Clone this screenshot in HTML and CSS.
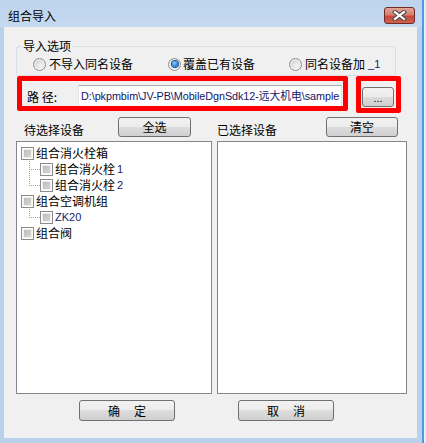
FILE: index.html
```html
<!DOCTYPE html>
<html>
<head>
<meta charset="utf-8">
<link rel="stylesheet" href="styles.css">
</head>
<body>
<div class="window">
  <div class="titlebar">
    <span class="title">组合导入</span>
    <div class="close">
      <svg width="15" height="11" viewBox="0 0 15 11">
        <path d="M3 2 L12 9 M12 2 L3 9" stroke="#4a4a4a" stroke-width="4.2" stroke-linecap="square"/>
        <path d="M3 2 L12 9 M12 2 L3 9" stroke="#ffffff" stroke-width="2.2" stroke-linecap="square"/>
      </svg>
    </div>
  </div>
  <div class="frame-body">
    <div class="client">
      <fieldset class="group">
        <legend>导入选项</legend>
        <div class="radios">
          <label class="radio r1"><span class="rb"></span>不导入同名设备</label>
          <label class="radio r2"><span class="rb on"></span>覆盖已有设备</label>
          <label class="radio r3"><span class="rb"></span>同名设备加<span class="lat">_1</span></label>
        </div>
      </fieldset>

      <div class="path-row">
        <span class="path-label">路 径:</span>
        <div class="textbox">D:\pkpmbim\JV-PB\MobileDgnSdk12-远大机电\sample</div>
        <div class="btn btn-browse">...</div>
      </div>

      <div class="list-head">
        <span class="head-label hl1">待选择设备</span>
        <div class="btn btn-all">全选</div>
        <span class="head-label hl2">已选择设备</span>
        <div class="btn btn-clear">清空</div>
      </div>

      <div class="lists">
        <div class="listbox left-list">
          <div class="row"><span class="cb"></span>组合消火栓箱</div>
          <div class="row child first"><span class="cb"></span>组合消火栓<span class="lat">1</span></div>
          <div class="row child"><span class="cb"></span>组合消火栓<span class="lat">2</span></div>
          <div class="row"><span class="cb"></span>组合空调机组</div>
          <div class="row child first"><span class="cb"></span><span class="lat">ZK20</span></div>
          <div class="row"><span class="cb"></span>组合阀</div>
        </div>
        <div class="listbox right-list"></div>
      </div>

      <div class="actions">
        <div class="btn btn-wide btn-ok"><span>确</span><span>定</span></div>
        <div class="btn btn-wide btn-cancel"><span>取</span><span>消</span></div>
      </div>

      <div class="mark mark-path"></div>
      <div class="mark mark-browse"></div>
    </div>
  </div>
</div>
</body>
</html>
```
FILE: styles.css
```css
* { box-sizing: border-box; }
html, body { margin: 0; padding: 0; }
body {
  font-family: "Noto Sans CJK SC", "Noto Sans", sans-serif;
  font-size: 12px;
  color: #000;
  background: #ffffff;
}

.window {
  width: 426px;
  height: 443px;
  background: linear-gradient(#bdd4ed, #c5d9f0 27px, #b9d1ea 28px, #b9d1ea);
  display: flex;
  flex-direction: column;
  box-shadow: inset -2px 0 0 #e4eef8, inset -4px 0 0 #4d9be0;
}

.titlebar {
  height: 27px;
  display: flex;
  align-items: flex-start;
  padding-left: 8px;
}
.title {
  margin-top: 7px;
  line-height: 17px;
  font-size: 12px;
}
.close {
  margin-left: auto;
  margin-right: 11px;
  margin-top: 7px;
  width: 31px;
  height: 17px;
  border: 1px solid #6e2c24;
  border-radius: 3px;
  background: linear-gradient(#e6a596, #d6806f 45%, #c24a3c 55%, #cf6050);
  display: flex;
  align-items: center;
  justify-content: center;
}

.frame-body {
  display: flex;
  padding: 0 9px 5px 4px;
}
.client {
  position: relative;
  width: 413px;
  height: 411px;
  background: #f0f0f0;
  display: flex;
  flex-direction: column;
}

/* group box */
.group {
  margin: 12px 0 0 12px;
  width: 380px;
  padding: 4px 0 4px 0;
  border: 1px solid #d5dfe5;
  border-radius: 3px;
  min-inline-size: 0;
}
.group legend {
  padding: 0 1px;
  margin-left: 5px;
  line-height: 14px;
  font-size: 12px;
}
.radios {
  display: flex;
  align-items: center;
  height: 14px;
  padding-left: 16px;
}
.radio {
  display: flex;
  align-items: center;
  gap: 3px;
  line-height: 14px;
}
.r1 { width: 135px; }
.r2 { width: 121px; gap: 2px; }
.rb {
  width: 13px;
  height: 13px;
  border-radius: 50%;
  border: 1px solid #8e8f8f;
  background: radial-gradient(circle at 60% 65%, #f4f4f4 0%, #e0e0e0 45%, #c4c4c4 100%);
  box-shadow: inset 0 0 0 1px #f6f6f6;
  display: flex;
  align-items: center;
  justify-content: center;
  flex: none;
}
.rb.on::after {
  content: "";
  width: 6px;
  height: 6px;
  border-radius: 50%;
  background: radial-gradient(circle at 40% 35%, #8fd0ff, #2a7fd4 60%, #1b5fae);
  box-shadow: 0 0 0 1px #19509a;
}
.lat {
  font-family: "Liberation Sans", Arial, sans-serif;
  font-size: 11px;
  color: #1a1a6a;
}

/* path row */
.path-row {
  margin-top: 9px;
  height: 23px;
  display: flex;
  align-items: center;
}
.path-label {
  margin-left: 23px;
  width: 51px;
  line-height: 14px;
}
.textbox {
  width: 264px;
  height: 23px;
  background: #fff;
  border: 1px solid #abadb3;
  border-color: #abadb3 #dbdfe6 #e3e9ef #e2e3ea;
  padding-left: 2px;
  line-height: 21px;
  font-family: "Liberation Sans", "Noto Sans CJK SC", sans-serif;
  font-size: 10.8px;
  letter-spacing: -0.05px;
  color: #141464;
  white-space: nowrap;
  overflow: hidden;
}

/* buttons */
.btn {
  border: 1px solid #707070;
  border-radius: 3px;
  background: linear-gradient(#f2f2f2 0%, #ebebeb 50%, #dddddd 50%, #cfcfcf 100%);
  display: flex;
  align-items: center;
  justify-content: center;
  line-height: 14px;
  font-size: 12px;
  flex: none;
}
.btn-browse {
  margin-left: 20px;
  width: 32px;
  height: 20px;
  align-items: flex-end;
  padding-bottom: 3px;
  font-family: "Liberation Sans", sans-serif;
  font-size: 11px;
  line-height: 10px;
}

.list-head {
  margin-top: 9px;
  height: 20px;
  display: flex;
}
.head-label {
  align-self: flex-end;
  line-height: 14px;
}
.hl1 { margin-left: 20px; width: 94px; }
.btn-all { width: 73px; height: 20px; }
.hl2 { margin-left: 26px; width: 109px; }
.btn-clear { width: 72px; height: 20px; }

/* lists */
.lists {
  margin-top: 4px;
  height: 253px;
  display: flex;
  gap: 5px;
  padding-left: 12px;
}
.listbox {
  background: #fff;
  border: 1px solid #828790;
  height: 253px;
}
.left-list {
  width: 196px;
  padding: 3px 0 0 4px;
}
.right-list { width: 190px; }

.row {
  position: relative;
  height: 16px;
  display: flex;
  align-items: center;
  gap: 2px;
  line-height: 16px;
  white-space: nowrap;
}
.row.child { padding-left: 19px; }
.row.child::before {
  content: "";
  position: absolute;
  left: 8px;
  top: -8px;
  width: 10px;
  height: 16px;
  border-left: 1px dotted #a0a0a0;
  border-bottom: 1px dotted #a0a0a0;
}
.row.child.first::before {
  top: -2px;
  height: 10px;
}
.cb {
  width: 13px;
  height: 13px;
  border: 1px solid #8a8a8a;
  background: linear-gradient(135deg, #b4b4b4, #dedede);
  box-shadow: inset 0 0 0 1px #ffffff, inset 0 0 0 2px #f0f0f0;
  flex: none;
}

/* actions */
.actions {
  margin-top: 6px;
  display: flex;
  padding-left: 75px;
  gap: 63px;
}
.btn-wide {
  width: 96px;
  height: 21px;
  gap: 14px;
}

/* annotation marks drawn over the dialog */
.mark {
  position: absolute;
  border: 5px solid #ff0000;
  border-radius: 2px;
}
.mark-path {
  left: 13px;
  top: 49px;
  width: 331px;
  height: 35px;
}
.mark-browse {
  left: 352px;
  top: 49px;
  width: 45px;
  height: 37px;
}
```
